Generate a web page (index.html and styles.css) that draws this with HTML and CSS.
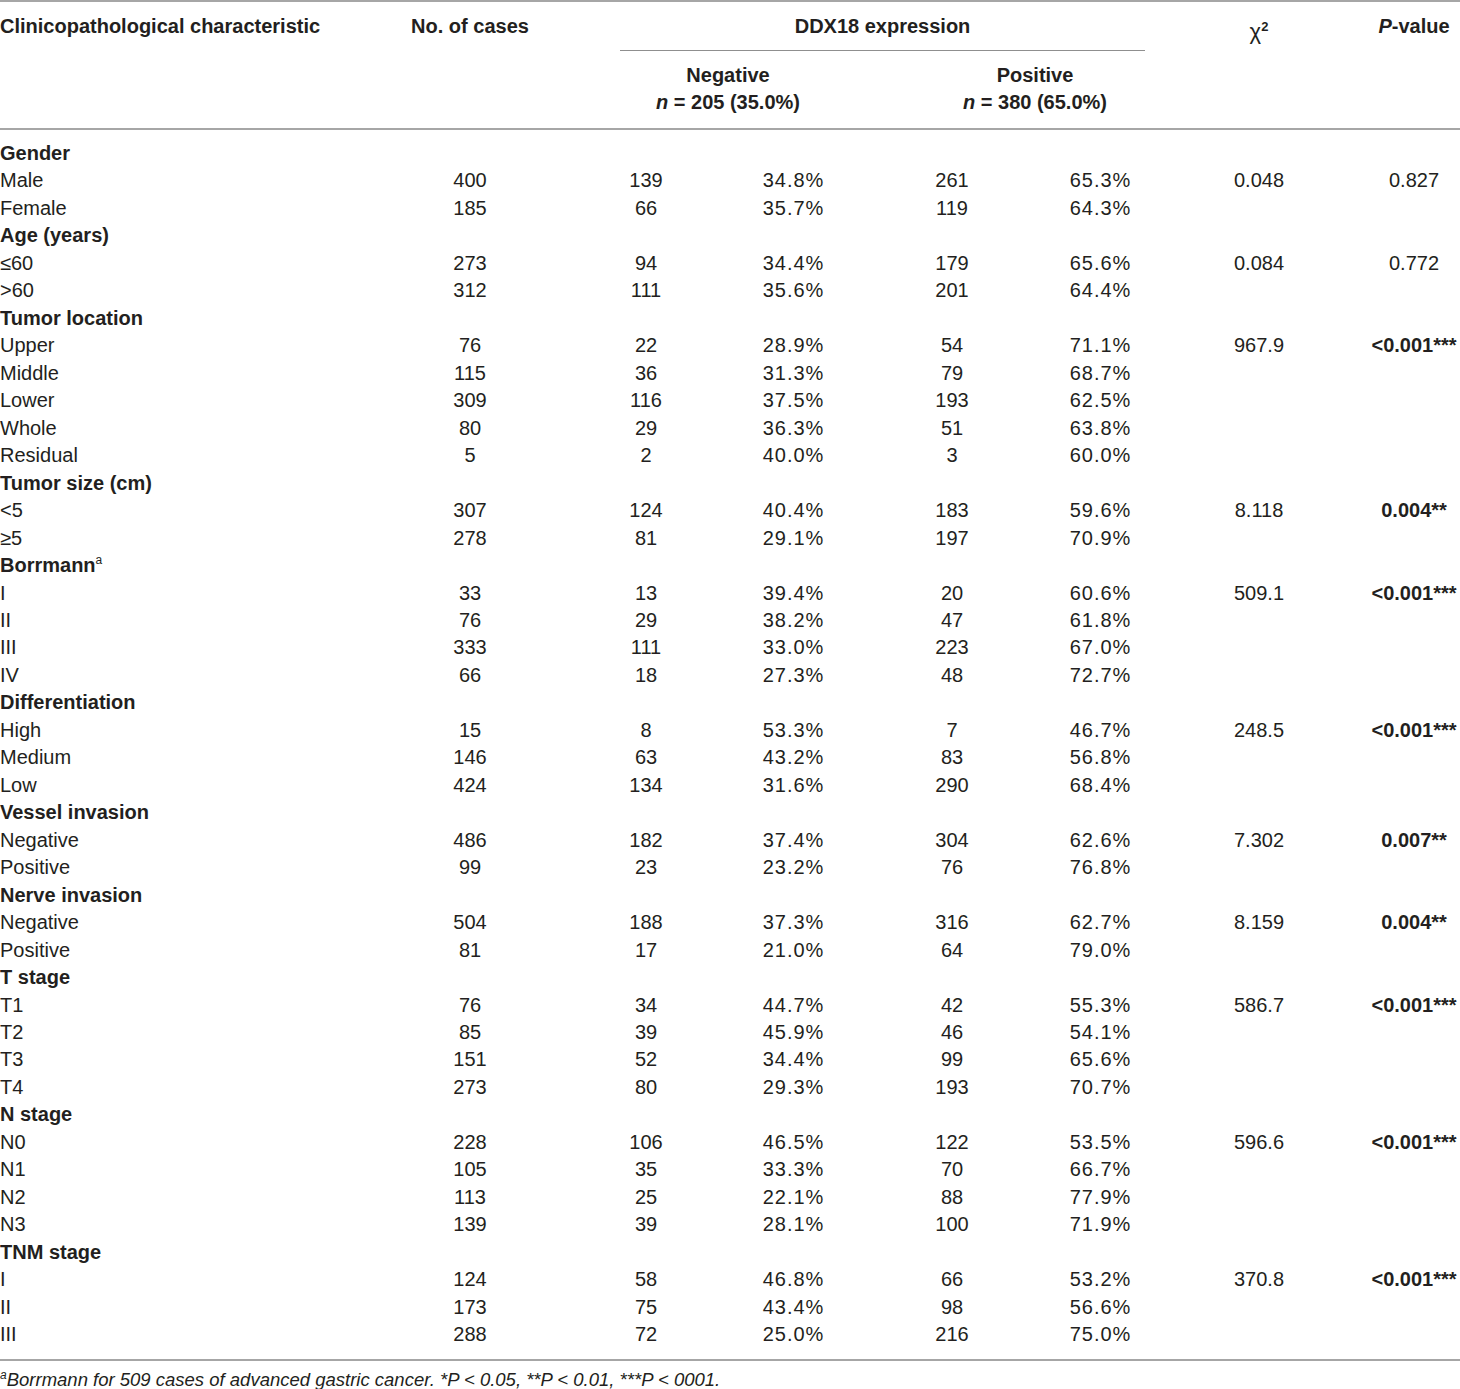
FILE: index.html
```html
<!DOCTYPE html>
<html lang="en">
<head>
    <meta charset="UTF-8">
    <title>DDX18 expression and clinicopathological characteristics</title>
    <link rel="stylesheet" href="styles.css">
</head>
<body>
    <table class="data">
        <colgroup>
            <col class="c1"><col class="c2"><col class="c3"><col class="c4">
            <col class="c5"><col class="c6"><col class="c7"><col class="c8">
        </colgroup>
        <thead>
            <tr class="head-top">
                <th class="left">Clinicopathological characteristic</th>
                <th>No. of cases</th>
                <th colspan="4"><div class="span-rule">DDX18 expression</div></th>
                <th class="chi">&chi;<sup>2</sup></th>
                <th><i>P</i>-value</th>
            </tr>
            <tr class="head-sub">
                <th></th>
                <th></th>
                <th colspan="2" class="neg">Negative<br><i>n</i> = 205 (35.0%)</th>
                <th colspan="2" class="pos">Positive<br><i>n</i> = 380 (65.0%)</th>
                <th></th>
                <th></th>
            </tr>
        </thead>
        <tbody>
            <tr class="first"><td class="group" colspan="8">Gender</td></tr>
            <tr><td>Male</td><td>400</td><td>139</td><td>34.8%</td><td>261</td><td>65.3%</td><td>0.048</td><td>0.827</td></tr>
            <tr><td>Female</td><td>185</td><td>66</td><td>35.7%</td><td>119</td><td>64.3%</td><td></td><td></td></tr>

            <tr><td class="group" colspan="8">Age (years)</td></tr>
            <tr><td>&le;60</td><td>273</td><td>94</td><td>34.4%</td><td>179</td><td>65.6%</td><td>0.084</td><td>0.772</td></tr>
            <tr><td>&gt;60</td><td>312</td><td>111</td><td>35.6%</td><td>201</td><td>64.4%</td><td></td><td></td></tr>

            <tr><td class="group" colspan="8">Tumor location</td></tr>
            <tr><td>Upper</td><td>76</td><td>22</td><td>28.9%</td><td>54</td><td>71.1%</td><td>967.9</td><td class="sig">&lt;0.001***</td></tr>
            <tr><td>Middle</td><td>115</td><td>36</td><td>31.3%</td><td>79</td><td>68.7%</td><td></td><td></td></tr>
            <tr><td>Lower</td><td>309</td><td>116</td><td>37.5%</td><td>193</td><td>62.5%</td><td></td><td></td></tr>
            <tr><td>Whole</td><td>80</td><td>29</td><td>36.3%</td><td>51</td><td>63.8%</td><td></td><td></td></tr>
            <tr><td>Residual</td><td>5</td><td>2</td><td>40.0%</td><td>3</td><td>60.0%</td><td></td><td></td></tr>

            <tr><td class="group" colspan="8">Tumor size (cm)</td></tr>
            <tr><td>&lt;5</td><td>307</td><td>124</td><td>40.4%</td><td>183</td><td>59.6%</td><td>8.118</td><td class="sig">0.004**</td></tr>
            <tr><td>&ge;5</td><td>278</td><td>81</td><td>29.1%</td><td>197</td><td>70.9%</td><td></td><td></td></tr>

            <tr><td class="group" colspan="8">Borrmann<sup class="note">a</sup></td></tr>
            <tr><td>I</td><td>33</td><td>13</td><td>39.4%</td><td>20</td><td>60.6%</td><td>509.1</td><td class="sig">&lt;0.001***</td></tr>
            <tr><td>II</td><td>76</td><td>29</td><td>38.2%</td><td>47</td><td>61.8%</td><td></td><td></td></tr>
            <tr><td>III</td><td>333</td><td>111</td><td>33.0%</td><td>223</td><td>67.0%</td><td></td><td></td></tr>
            <tr><td>IV</td><td>66</td><td>18</td><td>27.3%</td><td>48</td><td>72.7%</td><td></td><td></td></tr>

            <tr><td class="group" colspan="8">Differentiation</td></tr>
            <tr><td>High</td><td>15</td><td>8</td><td>53.3%</td><td>7</td><td>46.7%</td><td>248.5</td><td class="sig">&lt;0.001***</td></tr>
            <tr><td>Medium</td><td>146</td><td>63</td><td>43.2%</td><td>83</td><td>56.8%</td><td></td><td></td></tr>
            <tr><td>Low</td><td>424</td><td>134</td><td>31.6%</td><td>290</td><td>68.4%</td><td></td><td></td></tr>

            <tr><td class="group" colspan="8">Vessel invasion</td></tr>
            <tr><td>Negative</td><td>486</td><td>182</td><td>37.4%</td><td>304</td><td>62.6%</td><td>7.302</td><td class="sig">0.007**</td></tr>
            <tr><td>Positive</td><td>99</td><td>23</td><td>23.2%</td><td>76</td><td>76.8%</td><td></td><td></td></tr>

            <tr><td class="group" colspan="8">Nerve invasion</td></tr>
            <tr><td>Negative</td><td>504</td><td>188</td><td>37.3%</td><td>316</td><td>62.7%</td><td>8.159</td><td class="sig">0.004**</td></tr>
            <tr><td>Positive</td><td>81</td><td>17</td><td>21.0%</td><td>64</td><td>79.0%</td><td></td><td></td></tr>

            <tr><td class="group" colspan="8">T stage</td></tr>
            <tr><td>T1</td><td>76</td><td>34</td><td>44.7%</td><td>42</td><td>55.3%</td><td>586.7</td><td class="sig">&lt;0.001***</td></tr>
            <tr><td>T2</td><td>85</td><td>39</td><td>45.9%</td><td>46</td><td>54.1%</td><td></td><td></td></tr>
            <tr><td>T3</td><td>151</td><td>52</td><td>34.4%</td><td>99</td><td>65.6%</td><td></td><td></td></tr>
            <tr><td>T4</td><td>273</td><td>80</td><td>29.3%</td><td>193</td><td>70.7%</td><td></td><td></td></tr>

            <tr><td class="group" colspan="8">N stage</td></tr>
            <tr><td>N0</td><td>228</td><td>106</td><td>46.5%</td><td>122</td><td>53.5%</td><td>596.6</td><td class="sig">&lt;0.001***</td></tr>
            <tr><td>N1</td><td>105</td><td>35</td><td>33.3%</td><td>70</td><td>66.7%</td><td></td><td></td></tr>
            <tr><td>N2</td><td>113</td><td>25</td><td>22.1%</td><td>88</td><td>77.9%</td><td></td><td></td></tr>
            <tr><td>N3</td><td>139</td><td>39</td><td>28.1%</td><td>100</td><td>71.9%</td><td></td><td></td></tr>

            <tr><td class="group" colspan="8">TNM stage</td></tr>
            <tr><td>I</td><td>124</td><td>58</td><td>46.8%</td><td>66</td><td>53.2%</td><td>370.8</td><td class="sig">&lt;0.001***</td></tr>
            <tr><td>II</td><td>173</td><td>75</td><td>43.4%</td><td>98</td><td>56.6%</td><td></td><td></td></tr>
            <tr class="last"><td>III</td><td>288</td><td>72</td><td>25.0%</td><td>216</td><td>75.0%</td><td></td><td></td></tr>
        </tbody>
    </table>
    <p class="footnote"><sup>a</sup>Borrmann for 509 cases of advanced gastric cancer. *P &lt; 0.05, **P &lt; 0.01, ***P &lt; 0001.</p>
</body>
</html>
```

FILE: styles.css
```css
body {
    margin: 0;
    font-family: "Liberation Sans", Arial, sans-serif;
    color: #231f20;
    background: #fff;
}
.data {
    width: 1460px;
    border-collapse: collapse;
    table-layout: fixed;
    font-size: 20px;
}
.c1 { width: 380px; }
.c2 { width: 180px; }
.c3 { width: 172px; }
.c4 { width: 122px; }
.c5 { width: 196px; }
.c6 { width: 100px; }
.c7 { width: 218px; }
.c8 { width: 92px; }

th, td {
    padding: 0;
    text-align: center;
    font-weight: normal;
    white-space: nowrap;
}
th {
    font-weight: bold;
}
th.left, td:first-child {
    text-align: left;
}

.head-top th {
    border-top: 2px solid #a6a6a6;
    height: 48px;
    line-height: 27px;
    vertical-align: top;
    padding-top: 11px;
    box-sizing: border-box;
}
.head-top th:nth-child(3) {
    padding-bottom: 0;
    vertical-align: bottom;
}
.span-rule {
    margin: 0 5px 0 60px;
    padding-bottom: 10px;
    border-bottom: 1px solid #8f8f8f;
}
.head-top th.chi {
    font-weight: normal;
    font-size: 22px;
}
.chi sup {
    font-size: 13px;
    font-weight: bold;
}
.head-sub th {
    line-height: 27px;
    padding: 11px 0 12px;
    border-bottom: 2px solid #a6a6a6;
}
.head-sub th.neg { padding-left: 42px; }
.head-sub th.pos { padding-left: 66px; }

tbody td {
    line-height: 27.47px;
    height: 27.47px;
}
/* percentage columns run a little wider in the print */
tbody td:nth-child(4),
tbody td:nth-child(6) {
    letter-spacing: 1px;
    text-indent: 1px;
}
tbody tr.first td { padding-top: 10px; }
tbody tr.last td {
    padding-bottom: 10px;
    border-bottom: 2px solid #a6a6a6;
}
td.group {
    font-weight: bold;
    text-align: left;
}
td.sig {
    font-weight: bold;
}
sup.note {
    font-size: 12px;
    font-weight: normal;
    vertical-align: 8px;
    line-height: 0;
}

.footnote {
    margin: 8px 0 0;
    font-size: 18.5px;
    font-style: italic;
    line-height: 22px;
}
.footnote sup {
    font-size: 12px;
    line-height: 0;
}
```
